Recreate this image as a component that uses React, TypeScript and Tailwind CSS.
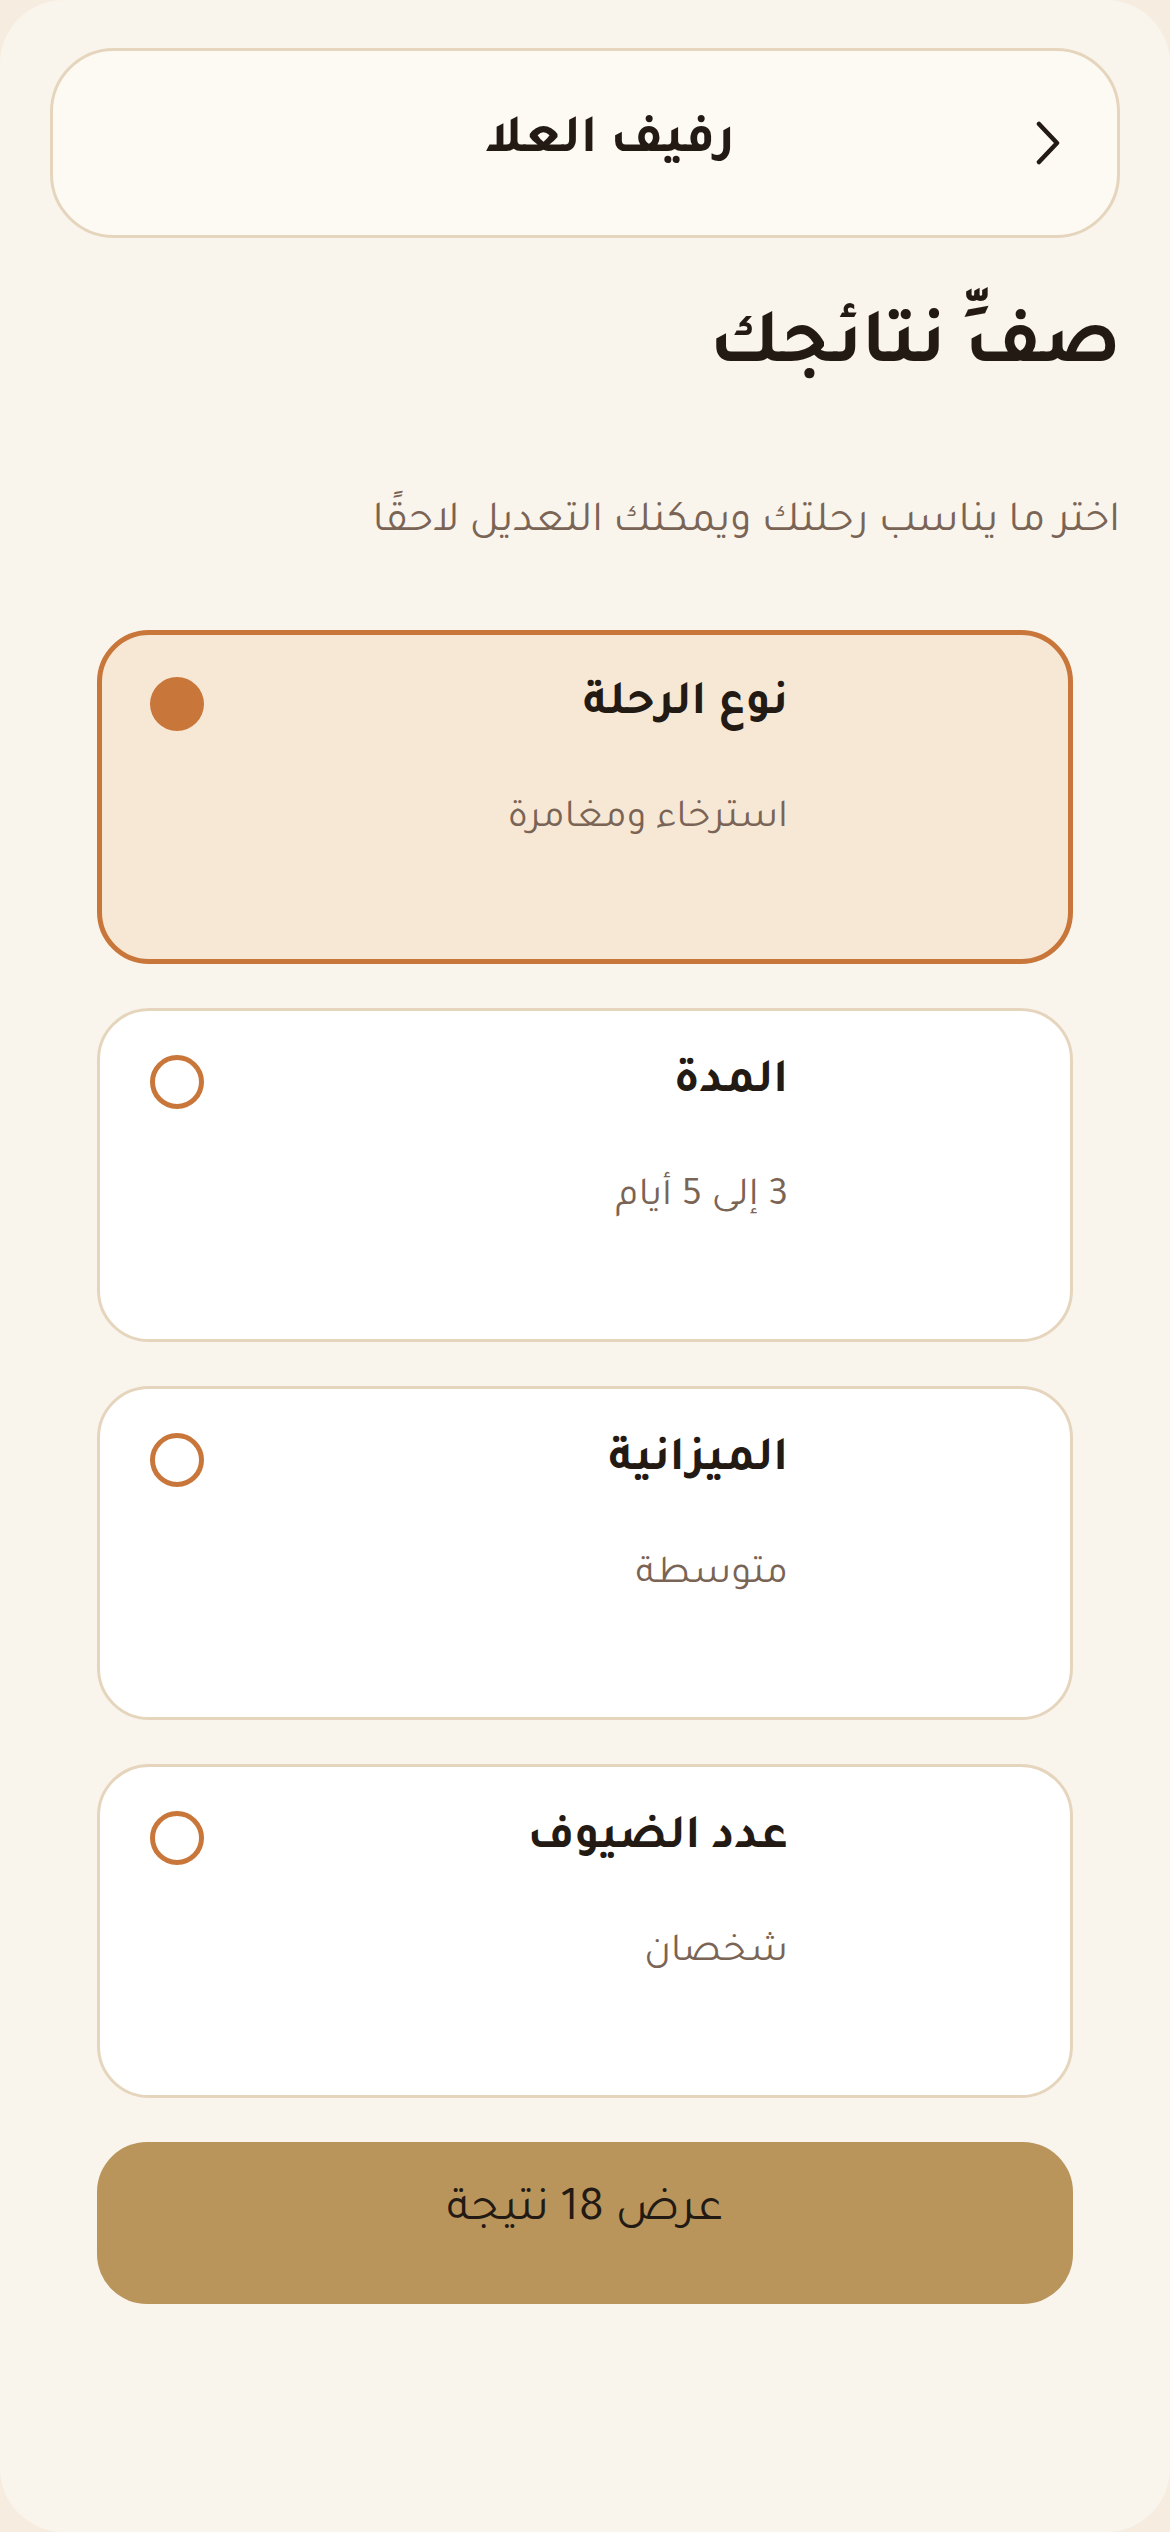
import React from 'react';

const options = [
  { title: 'نوع الرحلة', value: 'استرخاء ومغامرة', selected: true },
  { title: 'المدة', value: '3 إلى 5 أيام', selected: false },
  { title: 'الميزانية', value: 'متوسطة', selected: false },
  { title: 'عدد الضيوف', value: 'شخصان', selected: false },
];

function OptionCard({ title, value, selected }: { title: string; value: string; selected: boolean }) {
  return (
    <div
      className={
        selected
          ? 'flex h-[334px] items-start justify-between rounded-[52px] border-[5px] border-[#c8763a] bg-[#f7e8d6] pr-[280px] pl-[48px] pt-[38px]'
          : 'flex h-[334px] items-start justify-between rounded-[52px] border-[3px] border-[#e6d5bd] bg-white pr-[282px] pl-[50px] pt-[40px]'
      }
    >
      {/* text column */}
      <div className="flex flex-col gap-[52px]">
        <p className="text-[48px] font-bold leading-[1.4] text-[#231a14]">{title}</p>
        <p className="text-[40px] leading-[1.4] text-[#7a6455]">{value}</p>
      </div>
      {/* radio */}
      <div
        className={
          selected
            ? 'mt-[4px] h-[54px] w-[54px] shrink-0 rounded-full bg-[#c8763a]'
            : 'mt-[4px] h-[54px] w-[54px] shrink-0 rounded-full border-[5px] border-[#c8763a]'
        }
      />
    </div>
  );
}

export default function App() {
  return (
    <div dir="rtl" className="h-[2532px] w-full bg-[#f6ede0] font-[Tajawal,sans-serif]">
      <div className="h-full rounded-[64px] bg-[#f9f4ec] px-[50px] pt-[48px]">
        {/* Header bar */}
        <div className="flex h-[190px] items-center rounded-[64px] border-[3px] border-[#e6d5bd] bg-[#fdfaf4] pr-[56px]">
          <svg width="26" height="44" viewBox="0 0 26 44" fill="none" className="shrink-0">
            <path d="M4 3 L22 22 L4 41" stroke="#231a14" strokeWidth="4.5" strokeLinecap="round" strokeLinejoin="round" />
          </svg>
          <div className="flex-1 pl-[132px] text-center text-[54px] font-bold text-[#231a14]">رفيف العلا</div>
        </div>

        {/* Heading */}
        <h1 className="mt-[62px] text-[78px] font-bold leading-[1.3] text-[#231a14]">صفِّ نتائجك</h1>
        <p className="mt-[93px] text-[43px] leading-[1.4] text-[#7a6455]">اختر ما يناسب رحلتك ويمكنك التعديل لاحقًا</p>

        {/* Options */}
        <div className="mt-[75px] flex flex-col gap-[44px] px-[47px]">
          {options.map((o) => (
            <OptionCard key={o.title} {...o} />
          ))}
          <button className="flex h-[162px] items-center justify-center rounded-[50px] bg-[#b9955c] pb-[22px] text-[48px] text-[#231a14]">
            عرض 18 نتيجة
          </button>
        </div>
      </div>
    </div>
  );
}
